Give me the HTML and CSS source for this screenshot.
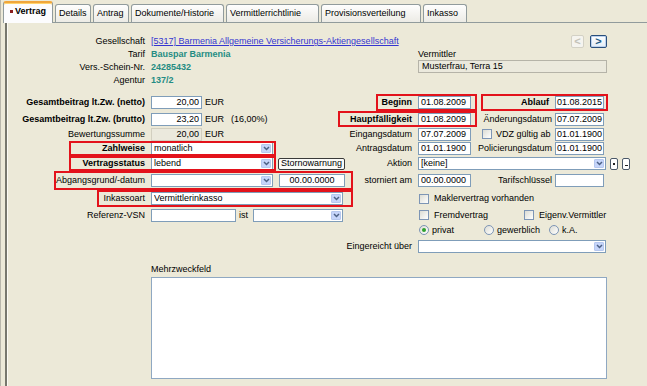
FILE: index.html
```html
<!doctype html>
<html lang="de">
<head>
    <meta charset="UTF-8">
    <title>Vertrag</title>
    <link rel="stylesheet" href="styles.css">
</head>
<body>
<div class="win">
    <div class="tabs">
        <div class="tab active t-vertrag"><span class="dot"></span>Vertrag</div>
        <div class="tab t-details">Details</div>
        <div class="tab t-antrag">Antrag</div>
        <div class="tab t-doku">Dokumente/Historie</div>
        <div class="tab t-verm">Vermittlerrichtlinie</div>
        <div class="tab t-prov">Provisionsverteilung</div>
        <div class="tab t-ink">Inkasso</div>
    </div>
    <div class="panel">
        <div class="head">
            <div class="info">
                <div class="irow"><span class="ilab">Gesellschaft</span><span class="link">[5317] Barmenia Allgemeine Versicherungs-Aktiengesellschaft</span></div>
                <div class="irow"><span class="ilab">Tarif</span><span class="val">Bauspar Barmenia</span></div>
                <div class="irow"><span class="ilab">Vers.-Schein-Nr.</span><span class="val">24285432</span></div>
                <div class="irow"><span class="ilab">Agentur</span><span class="val">137/2</span></div>
            </div>
            <div class="agent">
                <div class="nav"><span class="nb off">&lt;</span><span class="nb on">&gt;</span></div>
                <div class="cap">Vermittler</div>
                <div class="box ro">Musterfrau, Terra 15</div>
            </div>
        </div>

        <div class="rows">
            <!-- Zeile 1 -->
            <div class="lt">
                <span class="ll b">Gesamtbeitrag lt.Zw. (netto)</span>
                <span class="box amt">20,00</span><span class="unit">EUR</span>
            </div>
            <div class="rt">
                <div class="mark m-beg"><span class="ml b">Beginn</span><span class="box fa">01.08.2009</span></div>
                <div class="mark m-abl"><span class="ml b">Ablauf</span><span class="box fb">01.08.2015</span></div>
            </div>
            <!-- Zeile 2 -->
            <div class="lt">
                <span class="ll b">Gesamtbeitrag lt.Zw. (brutto)</span>
                <span class="box amt">23,20</span><span class="unit">EUR</span><span class="pct">(16,00%)</span>
            </div>
            <div class="rt">
                <div class="mark m-hf"><span class="ml b">Hauptfälligkeit</span><span class="box fa">01.08.2009</span></div>
                <span class="rb">Änderungsdatum</span><span class="box fb">07.07.2009</span>
            </div>
            <!-- Zeile 3 -->
            <div class="lt">
                <span class="ll">Bewertungssumme</span>
                <span class="box amt ro">20,00</span><span class="unit">EUR</span>
            </div>
            <div class="rt">
                <span class="ra">Eingangsdatum</span><span class="box fa">07.07.2009</span>
                <span class="chk"><span class="cb"></span>VDZ gültig ab</span><span class="box fb">01.01.1900</span>
            </div>
            <!-- Zeile 4 -->
            <div class="lt">
                <div class="mark m-zahl">
                    <span class="ml b">Zahlweise</span>
                    <div class="sel mid"><span class="txt">monatlich</span><i class="arr"><svg width="7" height="5" viewBox="0 0 7 5"><path d="M1 1l2.5 2.5L6 1" fill="none" stroke="#4d6185" stroke-width="1.5"/></svg></i></div>
                </div>
            </div>
            <div class="rt">
                <span class="ra">Antragsdatum</span><span class="box fa">01.01.1900</span>
                <span class="rb">Policierungsdatum</span><span class="box fb">01.01.1900</span>
            </div>
            <!-- Zeile 5 -->
            <div class="lt">
                <div class="mark m-zahl">
                    <span class="ml b">Vertragsstatus</span>
                    <div class="sel mid"><span class="txt">lebend</span><i class="arr"><svg width="7" height="5" viewBox="0 0 7 5"><path d="M1 1l2.5 2.5L6 1" fill="none" stroke="#4d6185" stroke-width="1.5"/></svg></i></div>
                </div>
                <span class="btn">Stornowarnung</span>
            </div>
            <div class="rt">
                <span class="ra">Aktion</span>
                <div class="sel full"><span class="txt">[keine]</span><i class="arr"><svg width="7" height="5" viewBox="0 0 7 5"><path d="M1 1l2.5 2.5L6 1" fill="none" stroke="#4d6185" stroke-width="1.5"/></svg></i></div>
                <span class="pm plus"></span><span class="pm minus"></span>
            </div>
            <!-- Zeile 6 -->
            <div class="lt">
                <div class="mark m-abg">
                    <span class="ml">Abgangsgrund/-datum</span>
                    <div class="sel mid"><span class="txt"></span><i class="arr"><svg width="7" height="5" viewBox="0 0 7 5"><path d="M1 1l2.5 2.5L6 1" fill="none" stroke="#4d6185" stroke-width="1.5"/></svg></i></div>
                    <span class="box date">00.00.0000</span>
                </div>
            </div>
            <div class="rt">
                <span class="ra">storniert am</span><span class="box fa">00.00.0000</span>
                <span class="rb">Tarifschlüssel</span><span class="box fb"></span>
            </div>
            <!-- Zeile 7 -->
            <div class="lt">
                <div class="mark m-ink">
                    <span class="ml">Inkassoart</span>
                    <div class="sel long"><span class="txt">Vermittlerinkasso</span><i class="arr"><svg width="7" height="5" viewBox="0 0 7 5"><path d="M1 1l2.5 2.5L6 1" fill="none" stroke="#4d6185" stroke-width="1.5"/></svg></i></div>
                </div>
            </div>
            <div class="rt">
                <span class="ra"></span>
                <div class="opts"><span class="opt"><span class="cb"></span>Maklervertrag vorhanden</span></div>
            </div>
            <!-- Zeile 8 -->
            <div class="lt">
                <span class="ll">Referenz-VSN</span>
                <span class="box ref"></span><span class="ist">ist</span>
                <div class="sel short"><span class="txt"></span><i class="arr"><svg width="7" height="5" viewBox="0 0 7 5"><path d="M1 1l2.5 2.5L6 1" fill="none" stroke="#4d6185" stroke-width="1.5"/></svg></i></div>
            </div>
            <div class="rt">
                <span class="ra"></span>
                <div class="opts">
                    <span class="opt wide"><span class="cb"></span>Fremdvertrag</span>
                    <span class="opt"><span class="cb"></span>Eigenv.Vermittler</span>
                </div>
            </div>
            <!-- Zeile 9 -->
            <div class="lt"></div>
            <div class="rt">
                <span class="ra"></span>
                <div class="opts">
                    <span class="opt radio"><span class="rd on"></span>privat</span>
                    <span class="opt radio"><span class="rd"></span>gewerblich</span>
                    <span class="opt radio"><span class="rd"></span>k.A.</span>
                </div>
            </div>
            <!-- Zeile 10 -->
            <div class="lt"></div>
            <div class="rt">
                <span class="ra">Eingereicht über</span>
                <div class="sel full"><span class="txt"></span><i class="arr"><svg width="7" height="5" viewBox="0 0 7 5"><path d="M1 1l2.5 2.5L6 1" fill="none" stroke="#4d6185" stroke-width="1.5"/></svg></i></div>
            </div>
        </div>

        <div class="memo">
            <div class="cap">Mehrzweckfeld</div>
            <div class="area"></div>
        </div>
    </div>
</div>
</body>
</html>
```

FILE: styles.css
```css
* {
    margin: 0;
    padding: 0;
    box-sizing: border-box;
}
body {
    background: #ece9d8;
    font: 9px/11px 'Liberation Sans', Arial, sans-serif;
    color: #000;
    overflow: hidden;
}
.win {
    height: 386px;
    border-left: 1px solid #b9b7ac;
}

/* Reiter */
.tabs {
    display: flex;
    align-items: flex-end;
    height: 22px;
}
.tab {
    height: 18px;
    margin-left: 2px;
    padding: 3px 0 0 3px;
    border: 1px solid #919b9c;
    border-bottom: 0;
    border-radius: 3px 3px 0 0;
    background: linear-gradient(#fefefe, #ecebe5);
    white-space: nowrap;
    flex-shrink: 0;
}
.tab.active {
    position: relative;
    z-index: 1;
    height: 22px;
    margin-bottom: -1px;
    padding: 3px 0 0 6px;
    border-top: 2px solid #f0a63c;
    box-shadow: inset 0 1px #ffd46e;
    background: #fcfcfe;
    font-weight: bold;
}
.tab .dot {
    display: inline-block;
    width: 3px;
    height: 3px;
    margin: 0 2px 1px 0;
    background: #8a1c1c;
}
.t-vertrag { width: 50px; }
.t-details { width: 36px; }
.t-antrag { width: 36px; }
.t-doku { width: 93px; }
.t-verm { width: 93px; }
.t-prov { width: 100px; }
.t-ink { width: 44px; }

.panel {
    margin-left: 4px;
    height: 364px;
    border-top: 1px solid #919b9c;
    border-left: 2px solid #77776d;
    box-shadow: inset 1px 0 #fbfaf4;
}

/* Kopf */
.head {
    display: flex;
    height: 71px;
    padding-top: 12px;
}
.info {
    width: 411px;
}
.irow {
    display: flex;
    align-items: center;
    height: 13px;
    white-space: nowrap;
}
.ilab {
    width: 144px;
    padding-right: 6px;
    text-align: right;
    flex-shrink: 0;
}
.link {
    color: #3535d0;
    text-decoration: underline;
}
.val {
    color: #258c83;
    font-weight: bold;
}
.agent {
    width: 189px;
}
.nav {
    display: flex;
    justify-content: flex-end;
    gap: 6px;
    height: 13px;
}
.nb {
    display: flex;
    align-items: center;
    justify-content: center;
    height: 13px;
    border-radius: 2px;
    font-size: 11px;
    font-weight: bold;
}
.nb.off {
    width: 13px;
    border: 1px solid #d3d1c5;
    background: #f5f4ef;
    color: #c3c2b8;
}
.nb.on {
    width: 17px;
    border: 1px solid #2a4f7c;
    background: linear-gradient(#ffffff, #e2ecf6);
    box-shadow: inset 0 0 0 1px #bcd2ee;
    color: #235a86;
}
.cap {
    height: 12px;
    line-height: 12px;
    white-space: nowrap;
}

/* Felder */
.box {
    display: block;
    height: 13px;
    line-height: 11px;
    padding: 0 3px;
    border: 1px solid #7f9db9;
    background: #fff;
    white-space: nowrap;
    overflow: hidden;
    flex-shrink: 0;
}
.box.ro {
    background: #ebe9dd;
    border-color: #b5b3a8;
}
.amt {
    width: 51px;
    padding: 0 2px;
    text-align: right;
}
.amt.ro {
    border-color: #d2cfc0;
}
.fa {
    width: 53px;
    padding: 0 2px;
}
.fb {
    width: 49px;
    padding: 0 1px;
}
.date {
    width: 66px;
    margin-left: 6px;
    text-align: center;
}
.ref { width: 85px; }

.sel {
    display: flex;
    align-items: center;
    height: 13px;
    padding-left: 2px;
    border: 1px solid #7f9db9;
    background: #fff;
    flex-shrink: 0;
    white-space: nowrap;
}
.sel .txt {
    flex: 1;
    overflow: hidden;
}
.sel .arr {
    display: flex;
    align-items: center;
    justify-content: center;
    width: 10px;
    height: 9px;
    margin-right: 1px;
    border: 1px solid #b6c8ef;
    border-radius: 1px;
    background: #c6d5fa;
}
.sel.mid { width: 122px; }
.sel.long { width: 192px; }
.sel.short { width: 90px; }
.sel.full { width: 188px; }

.btn {
    display: flex;
    align-items: center;
    justify-content: center;
    width: 67px;
    height: 12px;
    margin-left: 4px;
    border: 1px solid #3a3a3a;
    border-radius: 2px;
    background: #fbfbf8;
    white-space: nowrap;
    flex-shrink: 0;
}
.pm {
    position: relative;
    width: 8px;
    height: 12px;
    margin-left: 4px;
    border: 1px solid #4a5868;
    border-radius: 2px;
    background: #fff;
    flex-shrink: 0;
}
.pm.plus::after {
    content: "";
    position: absolute;
    left: 2px;
    top: 4px;
    width: 2px;
    height: 2px;
    background: #222;
}
.pm.minus::after {
    content: "";
    position: absolute;
    left: 2px;
    top: 6px;
    width: 3px;
    height: 1px;
    background: #222;
}

/* Zeilen */
.rows {
    display: grid;
    grid-template-columns: 346px 1fr;
    grid-template-rows: 17px 16px 14px 15px 15px 19px 17px 16px 14px 19px;
}
.lt, .rt {
    display: flex;
    align-items: center;
    white-space: nowrap;
}
.ll {
    width: 144px;
    padding-right: 6px;
    text-align: right;
    flex-shrink: 0;
}
.b { font-weight: bold; }
.unit { margin-left: 3px; }
.pct { margin-left: 7px; }
.ist {
    width: 17px;
    padding-left: 3px;
    flex-shrink: 0;
}
.ra {
    display: flex;
    justify-content: flex-end;
    width: 65px;
    padding-right: 6px;
    flex-shrink: 0;
}
.rb {
    display: flex;
    justify-content: flex-end;
    width: 84px;
    padding-right: 3px;
    flex-shrink: 0;
}
.chk {
    display: flex;
    align-items: center;
    width: 84px;
    padding-left: 11px;
    flex-shrink: 0;
}
.chk .cb { margin-right: 4px; }

/* rote Markierungen */
.mark {
    display: flex;
    align-items: center;
    align-self: stretch;
    margin-top: 2px;
    margin-bottom: 2px;
    outline: 2px solid #e3121b;
    flex-shrink: 0;
}
.ml {
    flex: 1;
    padding-right: 6px;
    text-align: right;
    white-space: nowrap;
}
.m-zahl {
    width: 203px;
    margin-left: 64px;
    padding-right: 1px;
}
.m-abg {
    width: 295px;
    margin-left: 49px;
    padding-right: 6px;
}
.m-ink {
    width: 252px;
    margin-left: 92px;
    padding-right: 8px;
}
.m-beg {
    width: 97px;
    margin-left: 25px;
    padding-right: 4px;
}
.m-abl {
    width: 123px;
    margin-left: 8px;
    padding-right: 2px;
}
.m-hf {
    width: 135px;
    margin-left: -13px;
    margin-right: -4px;
    padding-right: 4px;
}

/* Optionen */
.opts {
    display: flex;
    align-items: center;
    margin-left: 1px;
}
.opt {
    display: flex;
    align-items: center;
    flex-shrink: 0;
}
.opt.wide { width: 105px; }
.opt.radio { width: 65px; }
.cb {
    width: 10px;
    height: 10px;
    margin-right: 5px;
    border: 1px solid #7d95b5;
    background: linear-gradient(135deg, #dcdcd4, #ffffff);
    flex-shrink: 0;
}
.rd {
    position: relative;
    width: 10px;
    height: 10px;
    margin-right: 3px;
    border: 1px solid #7d95b5;
    border-radius: 50%;
    background: linear-gradient(135deg, #dcdcd4, #ffffff);
    flex-shrink: 0;
}
.rd.on::after {
    content: "";
    position: absolute;
    left: 2px;
    top: 2px;
    width: 4px;
    height: 4px;
    border-radius: 50%;
    background: #2ea12e;
}

/* Mehrzweckfeld */
.memo {
    width: 456px;
    margin: 7px 0 0 144px;
}
.memo .cap {
    margin-bottom: 2px;
}
.area {
    height: 102px;
    border: 1px solid #8fa8c2;
    background: #fff;
}
```
